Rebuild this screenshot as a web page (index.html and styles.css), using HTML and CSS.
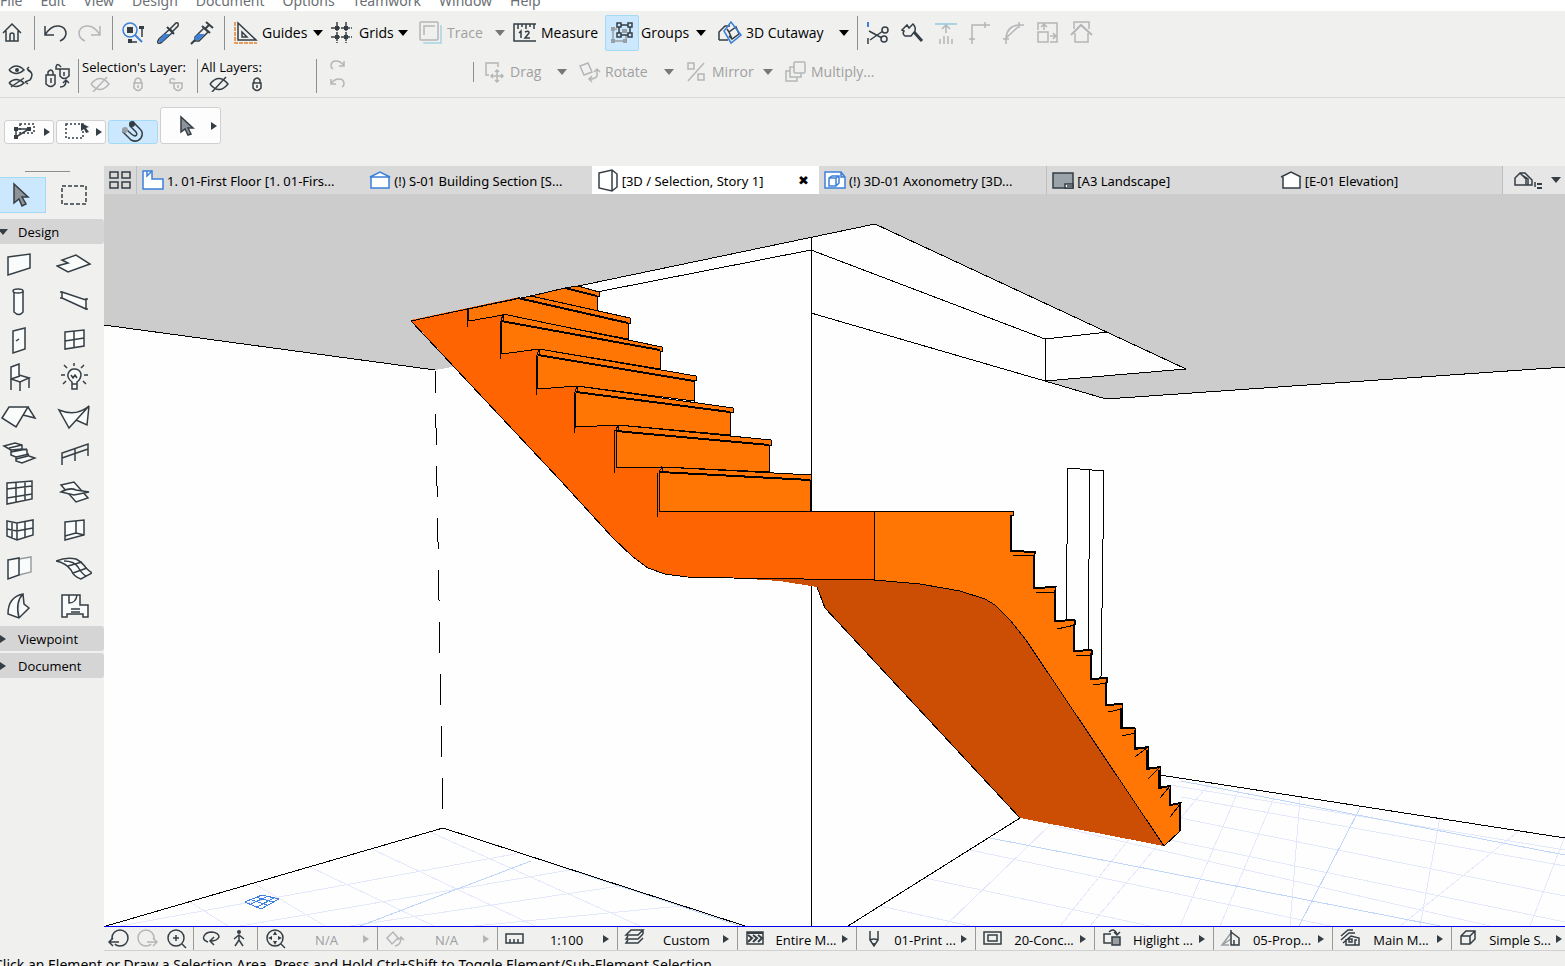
FILE: index.html
```html
<!DOCTYPE html>
<html lang="en">
<head>
<meta charset="utf-8">
<title>3D / Selection, Story 1</title>
<link rel="stylesheet" href="styles.css">
</head>
<body>
<nav class="menubar">
  <button>File</button><button>Edit</button><button>View</button><button>Design</button><button>Document</button><button>Options</button><button>Teamwork</button><button>Window</button><button>Help</button>
</nav>

<header class="toolbars">
  <div class="row main-row">
    <button aria-label="Home"><svg class="ic" viewBox="0 0 24 24"><path d="M1 12L10 3L19 12M4 10V20H16V10M8 20V14Q8 12 10 12Q12 12 12 14V20"/></svg></button>
    <i class="sep"></i>
    <button aria-label="Undo"><svg class="ic" viewBox="0 0 24 24"><path d="M2 5V14H11M2 14Q8 4 16 5Q23 6 23 13Q22 18 17 20"/></svg></button>
    <button aria-label="Redo" disabled><svg class="ic" viewBox="0 0 24 24"><path d="M22 5V14H13M22 14Q16 4 8 5Q1 6 1 13Q2 18 7 20"/></svg></button>
    <i class="sep"></i>
    <button aria-label="Find and select"><svg class="ic" viewBox="0 0 24 24"><circle class="blue" cx="8" cy="9" r="7"/><path class="blue w2" d="M13 14L20 21"/><path class="solid" d="M5 6H11V12H5ZM17 5H22V8H17ZM6 18H10V22H6Z"/><path d="M20 6V16M10 21H15"/></svg></button>
    <button aria-label="Pick up parameters"><svg class="ic" viewBox="0 0 24 24"><path d="M14 8L3 18Q1 21 2 22Q4 23 6 21L17 11Z"/><path class="bluefill" d="M8 13H14L6 21L2 21Z"/><path class="w2" d="M11 6L18 13"/><path d="M14 8L20 2Q23 1 22 5L17 10"/></svg></button>
    <button aria-label="Inject parameters"><svg class="ic" viewBox="0 0 24 24"><path class="w2" d="M12 5L20 12M16 1L23 7M19 4L15 8M1 23L5 19"/><path d="M14 7L5 16V20H9L18 11Z"/><path class="bluefill" d="M8 13H15L9 19H5V16Z"/></svg></button>
    <i class="sep"></i>
    <button><svg class="ic" viewBox="0 0 24 24"><path class="orange" d="M1 1V22H23" stroke-dasharray="4 1"/><path d="M4 2V19H22ZM8 11V16H13Z"/></svg><span>Guides</span><b class="down"></b></button>
    <button class="wide-end"><svg class="ic" viewBox="0 0 24 24"><path d="M6 1V22M15 1V22M0 7H21M0 16H21" stroke-dasharray="4 1"/><path class="solid" d="M4 5h4v4h-4zM13 5h4v4h-4zM4 14h4v4h-4zM13 14h4v4h-4z"/></svg><span>Grids</span><b class="down"></b></button>
    <button disabled><svg class="ic" viewBox="0 0 24 24"><path class="pale" d="M5 21V22H22V5H21"/><rect x="1" y="1" width="18" height="18" rx="1"/><path d="M5 14V5H16"/></svg><span>Trace</span><b class="down"></b></button>
    <button><svg class="ic" viewBox="0 0 24 24"><path d="M23 3H1V20H23M5 3V8M9 3V6M13 3V8M17 3V6M21 3V8M6 12L8 10V17M12 11Q16 9 16 12L12 17H17"/></svg><span>Measure</span></button>
    <button class="groups wide-end" aria-pressed="true"><span class="chip"><svg class="ic" viewBox="0 0 24 24"><path class="gray" d="M3 8V20H16M3 8H7M16 14V20"/><path d="M9 4H20V14H9Z"/><path class="hollow" d="M7 2h4v4h-4zM18 2h4v4h-4zM7 12h4v4h-4zM18 12h4v4h-4z"/><path class="grayfill" d="M1 6h4v4h-4zM1 18h4v4h-4zM13 18h4v4h-4zM12 8h5v4h-5z"/></svg></span><span>Groups</span><b class="down"></b></button>
    <button><svg class="ic" viewBox="0 0 24 24"><path d="M1 19V11L7 5H12M1 19H10M11 11L18 6L21 13L14 18ZM11 11L9 8M14 18L11 15"/><path class="blue" d="M13 1L23 14L13 22L6 10Z"/></svg><span>3D Cutaway</span><b class="down"></b></button>
    <i class="sep"></i>
    <button aria-label="Split"><svg class="ic" viewBox="0 0 24 24"><path class="blue w2" d="M2 1V6"/><path d="M2 17V23M3 10L16 17M4 19L17 10"/><circle cx="19" cy="9" r="3"/><circle cx="18" cy="18" r="3"/></svg></button>
    <button aria-label="Adjust"><svg class="ic" viewBox="0 0 24 24"><path d="M2 9L7 4L9 7L13 3Q16 6 15 10L11 15L5 15Q2 13 4 10Z"/><path class="w3" d="M14 11L22 20"/></svg></button>
    <button disabled aria-label="Elevate"><svg class="ic" viewBox="0 0 24 24"><path class="pale w2" d="M1 3H23"/><path d="M12 12V4M8 8L12 4L16 8M6 18V23M10 15V23M14 15V23M18 18V23"/></svg></button>
    <button disabled aria-label="Intersect"><svg class="ic" viewBox="0 0 24 24"><path d="M4 23V4H22M1 18H7M17 1V7"/></svg></button>
    <button disabled aria-label="Fillet"><svg class="ic" viewBox="0 0 24 24"><path d="M4 23V17Q5 5 17 4H22M1 18H7M17 1V7M4 17L16 6"/></svg></button>
    <button disabled aria-label="Resize"><svg class="ic" viewBox="0 0 24 24"><path d="M2 9V2H21V21H14M2 11H12V21H2ZM8 9V4M5 6L8 3L11 6M14 15H20M17 12L20 15L17 18"/></svg></button>
    <button disabled aria-label="Roof trim"><svg class="ic" viewBox="0 0 24 24"><path d="M4 8V1H19V8M5 12V21H18V12"/><path class="w2" d="M1 14L11 4L22 14"/></svg></button>
  </div>
  <div class="row layer-row">
    <button aria-label="Swap visibility"><svg class="ic big" viewBox="0 0 26 26"><path d="M1 7Q8-1 16 7Q8 14 1 7M1 20Q8 13 16 20Q8 27 1 20M3 24L16 15M19 6Q27 10 22 17L17 19M19 6L21 4M19 6L22 9M17 19L20 21"/><circle class="solid" cx="9" cy="7" r="2"/></svg></button>
    <button aria-label="Swap locks"><svg class="ic big" viewBox="0 0 26 26"><path d="M2 12H11V21Q7 26 2 21ZM4 12V9Q7 5 9 9V12M7 15V20M16 6H25V13Q20 18 16 13ZM18 6H12V4Q13-1 17 4M20 9V13M16 24Q22 24 22 18M19 20L22 17L25 20"/></svg></button>
    <i class="sep"></i>
    <section class="layers"><h2>Selection's Layer:</h2><div>
      <button disabled aria-label="Hide selection layer"><svg class="ic sm" viewBox="0 0 20 16"><path d="M1 8Q10-3 19 8Q10 19 1 8M3 16L17 1"/></svg></button>
      <button disabled aria-label="Lock selection layer"><svg class="ic sm" viewBox="0 0 20 16"><path d="M6 7H14V12Q10 17 6 12ZM7 7V4Q10 0 13 4V7M10 9V12"/></svg></button>
      <button disabled aria-label="Unlock selection layer"><svg class="ic sm" viewBox="0 0 20 16"><path d="M8 7H16V12Q12 17 8 12ZM10 7H4V4Q6 1 9 4M12 9V12"/></svg></button></div></section>
    <i class="sep"></i>
    <section class="layers"><h2>All Layers:</h2><div>
      <button aria-label="Show all layers"><svg class="ic sm" viewBox="0 0 20 16"><path d="M1 8Q10-3 19 8Q10 19 1 8M3 16L17 1"/></svg></button>
      <button aria-label="Unlock all layers"><svg class="ic sm" viewBox="0 0 20 16"><path d="M6 7H14V12Q10 17 6 12ZM7 7V4Q10 0 13 4V7M10 9V12"/></svg></button></div></section>
    <i class="sep"></i>
    <div class="history"><button disabled aria-label="Redo layers"><svg class="ic sm" viewBox="0 0 20 16"><path d="M16 4V9H11M16 9Q13 4 8 4Q3 4 3 9Q3 11 5 12"/></svg></button><button disabled aria-label="Undo layers"><svg class="ic sm" viewBox="0 0 20 16"><path d="M3 4V9H8M3 9Q6 4 11 4Q16 4 16 9Q16 11 14 12"/></svg></button></div>
    <i class="sep short"></i>
    <button class="edit" disabled><svg class="ic" viewBox="0 0 24 24"><path d="M5 15H2V3H14V7M13 10V22M7 16H19M11 12L13 10L15 12M11 20L13 22L15 20M9 14L7 16L9 18M17 14L19 16L17 18"/></svg><span>Drag</span><b class="down"></b></button>
    <button class="edit" disabled><svg class="ic" viewBox="0 0 24 24"><path d="M1 6L9 3L13 12L5 15ZM18 9V16Q16 19 11 19M15 12L18 9L21 12M13 16L10 19L13 22"/></svg><span>Rotate</span><b class="down"></b></button>
    <button class="edit" disabled><svg class="ic" viewBox="0 0 24 24"><path d="M2 3H8V9H2ZM12 14H18V20H12ZM2 21L18 3"/></svg><span>Mirror</span><b class="down"></b></button>
    <button class="edit" disabled><svg class="ic" viewBox="0 0 24 24"><rect x="9" y="2" width="11" height="11" rx="1"/><path d="M9 7H5V17H16V13M5 11H1V21H12V17"/></svg><span>Multiply...</span></button>
  </div>
</header>

<div class="infobox">
  <button aria-label="Selection method"><svg class="ic" viewBox="0 0 24 24"><path d="M7 4H21V13H7Z" stroke-dasharray="2 2"/><path d="M3 18V9H16L3 17"/><path class="solid" d="M1 15h4v4h-4zM1 7h4v4h-4zM14 7h4v4h-4z"/></svg><b class="right"></b></button>
  <button aria-label="Marquee method"><svg class="ic" viewBox="0 0 24 24"><path d="M1 4H18V18H1Z" stroke-dasharray="2 2"/><path class="solid" d="M16 3L24 7L21 8L24 12L21 13L19 9L16 11Z"/></svg><b class="right"></b></button>
  <button class="on" aria-label="Magnet"><svg class="ic" viewBox="0 0 24 24"><path d="M5 9L2 12L10 20Q16 23 20 18Q23 13 19 9L12 2L9 6L15 12Q17 15 14 16Q12 16 5 9Z"/><circle class="solid" cx="11" cy="4" r="3"/><circle class="grayfill" cx="4" cy="10" r="3"/></svg></button>
  <button class="tall" aria-label="Arrow tool"><svg class="ic" viewBox="0 0 24 24"><path class="arrow" d="M6 3V18L10 15L13 21L16 20L13 14H18Z"/></svg><b class="right"></b></button>
</div>

<main>
  <aside>
    <div class="grip"></div>
    <div class="pick">
      <button class="on" aria-label="Arrow"><svg class="ic xl" viewBox="0 0 36 30"><path class="arrow" d="M12 4V23L17 19L20 26L24 24L20 17H26Z"/></svg></button>
      <button aria-label="Marquee"><svg class="ic xl" viewBox="0 0 36 30"><path d="M6 6H30V24H6Z" stroke-dasharray="4 2"/></svg></button>
    </div>
    <button class="group-head"><b class="down"></b>Design</button>
    <div class="tools">
      <button aria-label="Wall"><svg class="ic xl" viewBox="0 0 36 30"><path class="pf" d="M7 8L29 5V19L7 26Z"/></svg></button>
      <button aria-label="Slab"><svg class="ic xl" viewBox="0 0 36 30"><path class="pf" d="M1 17L12 14L6 11L20 6L34 15L12 23Z"/></svg></button>
      <button aria-label="Column"><svg class="ic xl" viewBox="0 0 36 30"><path class="pf" d="M13 4V25Q18 30 22 25V4"/><ellipse class="pf" cx="17" cy="4" rx="5" ry="2"/></svg></button>
      <button aria-label="Beam"><svg class="ic xl" viewBox="0 0 36 30"><path class="pf" d="M6 5L30 13V22L6 11ZM4 5H6M4 11H6M29 12H32M29 22H32"/></svg></button>
      <button aria-label="Door"><svg class="ic xl" viewBox="0 0 36 30"><path class="pf" d="M12 6L24 3V24L12 28Z"/><path d="M15 16L18 14"/></svg></button>
      <button aria-label="Window"><svg class="ic xl" viewBox="0 0 36 30"><path class="pf" d="M9 7L28 5V21L9 24ZM18 6V22M9 16L28 13"/></svg></button>
      <button aria-label="Object"><svg class="ic xl" viewBox="0 0 36 30"><path class="pf" d="M10 4L18 1V12L28 15L19 19L10 16Z"/><path d="M10 16V27M19 19V28M28 15V25M10 16L19 13"/></svg></button>
      <button aria-label="Lamp"><svg class="ic xl" viewBox="0 0 36 30"><path class="pf" d="M16 21V19Q11 15 12 11Q14 6 18 6Q24 6 25 11Q25 16 21 19V21V26H16ZM16 21H21"/><path d="M15 12L17 15L19 12L21 15M18 3V0M11 5L8 2M25 5L28 2M9 12H5M28 12H32M10 18L7 21M27 18L30 21"/></svg></button>
      <button aria-label="Roof"><svg class="ic xl" viewBox="0 0 36 30"><path class="pf" d="M1 17L8 6H27L15 26ZM27 6L34 17L22 14"/></svg></button>
      <button aria-label="Shell"><svg class="ic xl" viewBox="0 0 36 30"><path class="pf" d="M3 9Q20 16 33 5L13 27ZM33 5L31 24L20 19"/></svg></button>
      <button aria-label="Stair"><svg class="ic xl" viewBox="0 0 36 30"><path class="pf" d="M3 7L14 4L21 6V10L26 11V15L28 17L34 19L21 24L15 22V18L10 16V11Z"/><path d="M8 9L21 6M10 13L26 10M15 18L28 15M10 11L21 10M15 20L27 17"/></svg></button>
      <button aria-label="Railing"><svg class="ic xl" viewBox="0 0 36 30"><path d="M6 26V14L32 5V17M6 19L32 10M19 9V22"/></svg></button>
      <button aria-label="Curtain wall"><svg class="ic xl" viewBox="0 0 36 30"><path class="pf" d="M6 6L31 4V22L6 27ZM6 12L31 9M6 21L31 17M15 5V25M24 5V24"/></svg></button>
      <button aria-label="Mesh"><svg class="ic xl" viewBox="0 0 36 30"><path class="pf" d="M5 8L18 5L32 21L20 25Z"/><path class="pf" d="M5 15Q14 10 20 13L33 15L18 18Z"/></svg></button>
      <button aria-label="Curtain grid"><svg class="ic xl" viewBox="0 0 36 30"><path class="pf" d="M6 6L16 8L32 5V20L16 25L6 21ZM16 8V25M24 7V22M11 7V23M6 14L16 16L32 13"/></svg></button>
      <button aria-label="Opening"><svg class="ic xl" viewBox="0 0 36 30"><path class="pf" d="M9 7L28 5V20L9 25Z"/><path d="M20 6V18L9 21M20 18L28 20"/></svg></button>
      <button aria-label="Wall end"><svg class="ic xl" viewBox="0 0 36 30"><path class="gray pf" d="M18 6L30 4V19L18 22"/><path class="pf" d="M7 7L18 5V22L7 26Z"/></svg></button>
      <button aria-label="Truss"><svg class="ic xl" viewBox="0 0 36 30"><path class="pf" d="M0 8Q10 4 20 6Q26 9 30 15Q33 18 36 20L25 26Q18 24 15 17Q10 10 0 8"/><path d="M8 8Q18 8 22 14Q26 21 30 23M12 13L26 9M17 20L31 15"/></svg></button>
      <button aria-label="Morph"><svg class="ic xl" viewBox="0 0 36 30"><path class="pf" d="M7 23Q7 6 22 3L23 13L28 17L18 27ZM22 3Q14 11 18 27"/></svg></button>
      <button aria-label="Zone"><svg class="ic xl" viewBox="0 0 36 30"><path class="pf" d="M6 4H24V14H32V26H27V23H11V26H6Z"/><path d="M13 4V12Q20 12 21 4M15 18H24M15 21H24"/></svg></button>
    </div>
    <button class="group-head"><b class="right"></b>Viewpoint</button>
    <button class="group-head"><b class="right"></b>Document</button>
  </aside>

  <section class="work">
    <div class="tabs">
      <button class="overview" aria-label="Tab overview"><svg class="ic" viewBox="0 0 24 24"><path d="M2 4h8v6h-8zM14 4h8v6h-8zM2 14h8v6h-8zM14 14h8v6h-8z"/></svg></button>
      <button class="tab"><svg class="ic" viewBox="0 0 24 24"><path class="blue wf" d="M1 2H10V10H21V20H1Z"/><path class="blue" d="M5 2V7L10 2"/></svg><span>1. 01-First Floor [1. 01-Firs...</span></button>
      <button class="tab"><svg class="ic" viewBox="0 0 24 24"><path class="blue wf" d="M2 8V19H20V8M1 8L11 3L21 8Z"/></svg><span>(!) S-01 Building Section [S...</span></button>
      <button class="tab active"><svg class="ic" viewBox="0 0 24 24"><path d="M2 4L15 1L20 5V18L15 22L2 19ZM15 1V22"/></svg><span>[3D / Selection, Story 1]</span><b class="close">✖</b></button>
      <button class="tab"><svg class="ic" viewBox="0 0 24 24"><path class="blue wf" d="M1 3H17L21 8V19H1ZM17 3V8H21M5 9L8 7H15V14L12 17H5ZM5 9H12V17M12 9L15 7"/></svg><span>(!) 3D-01 Axonometry [3D...</span></button>
      <button class="tab split"><svg class="ic" viewBox="0 0 24 24"><path class="sheet" d="M1 4H21V19H1Z"/><path class="wf" d="M13 15H21V19H13Z"/><path d="M15 17H21"/></svg><span>[A3 Landscape]</span></button>
      <button class="tab"><svg class="ic" viewBox="0 0 24 24"><path class="wf" d="M3 8V19H20V8M1 8L11 3L21 8"/></svg><span>[E-01 Elevation]</span></button>
      <button class="more" aria-label="Tab options"><svg class="ic" viewBox="0 0 30 24"><path d="M2 17V10L7 5L13 11V17ZM7 5L12 5L19 12V17H13M9 7L15 11V17M22 14V19"/><path class="w2" d="M24 16H29M24 20H29"/></svg><b class="down"></b></button>
    </div>
    <div class="view">
      <svg viewBox="104 194 1461 732" preserveAspectRatio="xMinYMin slice" role="img" aria-label="3D view of a staircase" shape-rendering="crispEdges">
        <rect class="wf0" x="104" y="194" width="1461" height="732"/>
        <path class="ceil" d="M104 194H1565V367L1106 399L1045 381L1186 369L875 224L411 320L458 366L435 370L104 325Z"/>
        <g class="grid">
          <path d="M190 902L228 926M255 884L325 926M310 867L434 926M372 849L535 926M430 832L640 926M120 926L520 853M240 926L570 870M350 926L620 886M475 926L680 906"/>
          <path d="M970 850L1330 926M1055 826L1490 926M1170 840L1565 922M1180 818L1565 896M1181 797L1565 866M1170 785L1565 850M925 878L1150 926M880 906L970 926M945 926L1050 825M1060 926L1130 838M1180 926L1240 787M1290 926L1300 798M1420 926L1440 817M1530 926L1565 836M1090 926L1210 783M1220 926L1275 795M1400 926L1520 830"/>
          <path class="axis" d="M360 926L531 861M487 842L740 926M990 838L1440 926M1299 926L1360 808M1181 781L1565 855"/>
        </g>
        <path class="ln" d="M104 325L435 370M411 321L875 224L1186 369L1045 381M811 313L1045 381L1106 399L1565 367M597 292L811 250L1045 339L1108 332M1045 339V381M811 237V511M811 585L812 926M106 926L443 828L745 926M848 926L1020 818M1160 775L1565 838M1068 468L1104 471M1068 468L1066 622M1104 471L1101 677M1090 470L1088 651"/>
        <path class="ln" d="M435 370L443 828" stroke-dasharray="31 21" stroke-dashoffset="8"/>

        <path class="under" d="M733 578L874 579L920 583L960 590L986 598L997 604L1012 619L1028 640L1164 846L1020 818L825 608L817 587L780 581Z"/>
        <path class="ln" d="M817 587L825 608L1020 818"/>
        <path class="side" d="M411 320L519 297L662 440L662 511H874V580L733 578L687 577L665 574L648 568L633 557L613 538L560 480Z"/>
        <path class="ln" d="M519 298L411 321L560 480L613 538L633 557L648 568L665 574L687 577L733 578L874 580"/>

        <g class="riser">
          <path d="M531 296L565 288L578 286L599 292V296H597V311Z"/>
          <path d="M468 309L531 296L630 318V323H628V339L503 315L469 321Z"/>
          <path d="M501 321L503 314L662 347V351H660V369L539 349L502 354Z"/>
          <path d="M537 355L539 349L696 376V380H694V401L577 386L538 389Z"/>
          <path d="M575 392L577 386L733 408V412H730V435L618 425L576 427Z"/>
          <path d="M616 430L618 425L771 440V445H769V472L662 467L617 468Z"/>
          <path d="M659 472L662 467L811 475V480H810V511H659Z"/>
          <path d="M874 511L1013 512V515H1011V551L1036 552L1034 556V588L1056 587L1055 590V620L1075 620L1074 624V650L1092 650L1091 653V679L1107 678L1106 682V705L1122 704V728L1135 728V748L1148 747V768L1160 767V787L1170 786V805L1181 803L1180 831L1164 846L1026 640L1010 620L995 605L985 599L960 591L920 584L874 580Z"/>
        </g>
        <path class="ln" d="M659 511H1013"/>
        <path class="ln bold" d="M565 288L597 296M518 298L628 323M501 321L660 350M538 355L694 381M576 392L730 412M616 431L769 445M660 472L810 480M1011 515V551L1036 552M1034 556V588L1056 587M1055 590V621L1075 620M1074 624V651L1092 650M1091 653V679L1107 678M1106 682V705L1122 704M1121 708V728L1135 728M1135 730V749L1148 747M1147 750V769L1160 767M1159 770V788L1170 786M1170 789V805L1181 803M1180 806V831"/>
        <path class="ln" d="M503 321V314M539 355V349M577 392V386M618 431V425M662 472V467M467 308V327M500 321V359M536 355V395M574 392V433M614 430V473M657 473V517M1013 555H1034V552M1036 593L1055 592V588M1057 629L1075 625V620M1076 656L1092 655V650M1093 685L1107 683V678M1108 712L1122 709V704M1122 736L1135 733V728M1135 757L1148 747M1148 779L1160 767M1160 798L1170 786M1170 817L1181 803"/>
        <path class="sheetmark" d="M245 902L262 895L279 899L261 909ZM251 904L268 896M257 907L274 898M249 899L267 905M255 897L273 902"/>
      </svg>
    </div>
    <div class="quick">
      <div class="cell nav3"><button aria-label="Previous view"><svg class="ic" viewBox="0 0 24 24"><circle cx="13" cy="11" r="8"/><path class="halo" d="M1 15H8"/><path d="M12 15H2M6 11L2 15L6 19"/></svg></button><button disabled aria-label="Next view"><svg class="ic" viewBox="0 0 24 24"><circle cx="10" cy="11" r="8"/><path class="halo" d="M15 15H23"/><path d="M11 15H21M17 11L21 15L17 19"/></svg></button><button aria-label="Zoom in"><svg class="ic" viewBox="0 0 24 24"><circle cx="11" cy="11" r="8"/><path d="M17 17L21 21M11 8V14M8 11H14"/></svg></button></div>
      <div class="cell nav2"><button aria-label="Orbit"><svg class="ic" viewBox="0 0 24 24"><path d="M9 15Q3 13 5 9Q7 5 13 5Q20 6 20 10Q18 14 12 14M15 10L11 14L15 18"/></svg></button><button aria-label="Walk"><svg class="ic" viewBox="0 0 24 24"><circle class="solid" cx="12" cy="5" r="2"/><path d="M12 8V13L16 19M12 13L8 19M7 12L12 8L17 12"/></svg></button></div>
      <button class="cell zoomed"><svg class="ic" viewBox="0 0 24 24"><circle cx="12" cy="11" r="8"/><path d="M18 17L22 21"/><path class="solid" d="M10 8L12 4L14 8ZM10 14L12 18L14 14ZM9 9L5 11L9 13ZM15 9L19 11L15 13Z"/></svg><span class="na">N/A</span><b class="right dim"></b></button>
      <button class="cell zoomed" disabled><svg class="ic" viewBox="0 0 24 24"><path d="M4 11L10 5L15 11L9 17ZM12 19Q18 18 18 11M15 13L18 10L21 13"/></svg><span class="na">N/A</span><b class="right dim"></b></button>
      <button class="cell zoomed"><svg class="ic" viewBox="0 0 24 24"><path d="M3 7H20V16H3ZM7 16V12M11 16V12M15 16V12"/></svg><span>1:100</span><b class="right"></b></button>
      <button class="cell zoomed"><svg class="ic" viewBox="0 0 24 24"><path d="M8 3H20L15 8H3ZM20 7L15 12H3L5 9M20 11L15 16H3L5 13M20 3V7"/></svg><span>Custom</span><b class="right"></b></button>
      <button class="cell"><svg class="ic" viewBox="0 0 24 24"><path d="M4 5H20V17H4Z"/><path class="w2" d="M4 6H20M5 8L9 11L5 15M10 8L14 11L10 15M15 8L19 11L15 15"/></svg><span>Entire M...</span><b class="right"></b></button>
      <button class="cell"><svg class="ic" viewBox="0 0 24 24"><path d="M8 4V13L12 19L16 13V4M8 13Q12 11 16 13M12 16V19"/></svg><span>01-Print ...</span><b class="right"></b></button>
      <button class="cell"><svg class="ic" viewBox="0 0 24 24"><path d="M3 5H20V17H3ZM7 8H16V14H7Z"/></svg><span>20-Conc...</span><b class="right"></b></button>
      <button class="cell"><svg class="ic" viewBox="0 0 24 24"><path d="M11 16H4V7H11M9 5Q14 0 17 7M14 5L17 8L20 5"/><path class="grayfill dk" d="M12 10H20V18H12Z"/></svg><span>Higlight ...</span><b class="right"></b></button>
      <button class="cell"><svg class="ic" viewBox="0 0 24 24"><path class="gray" d="M12 6L3 18H10M3 18L12 12"/><path d="M12 3V18H20V11L12 5M15 18V13"/></svg><span>05-Prop...</span><b class="right"></b></button>
      <button class="cell"><svg class="ic" viewBox="0 0 24 24"><path d="M3 9L10 3L15 3M3 13L11 6L17 6M5 16L13 9L21 11V18H8V12M11 12H14V15H11ZM17 18V13H19"/></svg><span>Main M...</span><b class="right"></b></button>
      <button class="cell"><svg class="ic" viewBox="0 0 24 24"><path d="M4 9L9 4H18V12L13 17H4ZM4 9H13V17M13 9L18 4"/></svg><span>Simple S...</span><b class="right"></b></button>
    </div>
  </section>
</main>
<footer class="status">Click an Element or Draw a Selection Area. Press and Hold Ctrl+Shift to Toggle Element/Sub-Element Selection.</footer>
</body>
</html>
```
FILE: styles.css
```css
* { box-sizing: border-box; }
html, body { height: 100%; }
body {
  margin: 0;
  display: flex;
  flex-direction: column;
  overflow: hidden;
  background: #f0f0ef;
  color: #000;
  font: 13px/20px "Open Sans", "Noto Sans", sans-serif;
}
button {
  display: flex;
  align-items: center;
  padding: 0;
  border: 0;
  background: none;
  color: inherit;
  font: inherit;
  white-space: nowrap;
}
button:disabled { color: #a0a0a0; }

/* icons */
.ic { width: 24px; height: 24px; flex: none; fill: none; stroke: #343e44; stroke-width: 1.5; }
.ic.big { width: 26px; height: 26px; }
.ic.sm { width: 20px; height: 16px; }
.ic.xl { width: 36px; height: 30px; }
button:disabled .ic { stroke: #b4b6b7; }
.ic .blue { stroke: #3c80d8; }
.ic .orange { stroke: #e67e2e; }
.ic .pale { stroke: #a8d4e4; }
.ic .gray { stroke: #999fa3; }
.ic .w2 { stroke-width: 2; }
.ic .w3 { stroke-width: 3; }
.ic .solid { fill: #343e44; stroke: none; }
.ic .bluefill { fill: #3c80d8; stroke: none; }
.ic .grayfill { fill: #999fa3; stroke: none; }
.ic .grayfill.dk { stroke: #343e44; }
.ic .hollow { fill: #cce8ff; }
.ic .pf { fill: #fafbfb; }
.ic .wf { fill: #fff; }
.ic .sheet { fill: #9aa2aa; }
.ic .arrow { fill: #8e9499; }
.ic .halo { stroke: #f0f0ef; stroke-width: 5; }

.down, .right { flex: none; width: 0; height: 0; border: solid transparent; }
.down { border-width: 6px 5px 0; border-top-color: currentColor; }
.right { border-width: 4px 0 4px 6px; border-left-color: #343e44; }
.right.dim { border-left-color: #b4b6b7; }
button:disabled .down { color: #777; }

.menubar {
  display: flex;
  align-items: flex-end;
  gap: 18px;
  height: 11px;
  flex: none;
  overflow: hidden;
  background: #fff;
  color: #6a6f74;
  font-family: "Noto Sans", sans-serif;
  font-size: 14px;
}

/* toolbars */
.toolbars { flex: none; border-bottom: 1px solid #d8d8d8; }
.row { display: grid; align-items: center; font-size: 14px; }
.main-row {
  height: 44px;
  padding-left: 2px;
  grid-template-columns: 32px 9px 35px 34px 10px 34px 34px 34px 10px 97px 88px 94px 92px 113px 139px 9px repeat(7, 34px);
}
.main-row button { gap: 4px; padding-right: 8px; }
.main-row .wide-end { padding-right: 12px; }
.row .down { margin-left: auto; }
.sep { width: 1px; height: 34px; background: #8b8f92; }
.sep.short { height: 20px; margin-bottom: 8px; }
.chip {
  display: flex;
  align-items: center;
  justify-content: center;
  width: 34px;
  height: 36px;
  background: #cce8ff;
  border: 1px solid #a3daf6;
  border-radius: 2px;
}
.main-row .groups { gap: 2px; }
.layer-row {
  height: 42px;
  padding-left: 8px;
  grid-template-columns: 36px 34px 4px 115px 4px 115px 12px 145px 11px 95px 107px 99px 96px;
}
.layer-row > .edit { gap: 2px; padding: 0 12px 8px 0; }
.layer-row h2 { margin: 0; font: inherit; font-size: 13px; line-height: 18px; white-space: nowrap; }
.layers { padding-bottom: 3px; }
.layers div { display: flex; gap: 18px; padding-left: 8px; }
.history { display: grid; gap: 2px; padding-bottom: 4px; }

.infobox { display: flex; align-items: flex-end; gap: 2px; flex: none; height: 68px; padding: 0 4px 22px; }
.infobox button {
  justify-content: space-between;
  width: 50px;
  height: 24px;
  padding: 0 3px 0 8px;
  background: #fdfdfd;
  border: 1px solid #d0d0d0;
  border-radius: 3px;
}
.infobox .on { justify-content: center; padding: 0; background: #cce8ff; border-color: #a3daf6; }
.infobox .tall { width: 61px; height: 37px; padding-left: 14px; }

main { display: grid; grid-template-columns: 104px minmax(0, 1fr); flex: 1; min-height: 0; }

/* toolbox */
aside { overflow: hidden; }
.grip { width: 45px; height: 6px; margin-left: 25px; border-bottom: 1px solid #8b8f92; }
.pick { display: flex; gap: 5px; padding: 5px 0 6px; }
.pick button { width: 46px; height: 36px; justify-content: center; }
.pick .on { background: #cce8ff; border: 1px solid #a3daf6; border-left: 0; padding-right: 6px; }
.group-head {
  position: relative;
  width: 100%;
  height: 25px;
  margin-bottom: 2px;
  padding-left: 18px;
  background: #d5d5d5;
  border-radius: 0 3px 3px 0;
}
.group-head b { position: absolute; left: 0; }
.group-head .down { left: -2px; color: #343e44; }
.tools { display: grid; grid-template-columns: 55px 49px; grid-auto-rows: 38px; }
.tools button { padding: 0 0 2px 1px; }

/* drawing area */
.work { display: flex; flex-direction: column; min-width: 0; min-height: 0; }
.tabs { display: flex; height: 28px; flex: none; background: #d9d9d9; font-family: "Noto Sans", sans-serif; }
.overview { width: 33px; justify-content: center; border-right: 1px solid #bfbfbf; }
.tab { flex: 1 1 0; min-width: 0; gap: 1px; padding: 2px 10px 0 5px; }
.tab.active { background: #fff; }
.tab.split { border-left: 1px solid #bfbfbf; }
.close { margin-left: auto; font-family: "DejaVu Sans", sans-serif; font-size: 13px; }
.more { width: 63px; gap: 8px; padding-left: 10px; background: #e6e6e6; border-left: 1px solid #bfbfbf; }
.more .ic { width: 30px; }
.more .down { color: #343e44; }
.view { flex: 1; min-height: 0; border-bottom: 1px solid #0000f0; }
.view svg { display: block; width: 100%; height: 100%; }
.wf0 { fill: #fefefe; }
.ceil { fill: #ccc; }
.side { fill: #ff6403; }
.under { fill: #cb4e04; }
.riser path { fill: #ff7605; stroke: #000; stroke-width: 1; }
.ln { fill: none; stroke: #000; stroke-width: 1; }
.ln.bold { stroke-width: 2; }
.grid path { fill: none; stroke: #e4e8fb; stroke-width: 1; }
.grid .axis { stroke: #c0d6f8; }
.sheetmark { fill: none; stroke: #3c80e0; stroke-width: 1; }

.quick { display: flex; flex: none; height: 24px; overflow: hidden; border-bottom: 1px solid #d0d0d0; }
.cell { display: flex; align-items: center; flex: 1 0 119px; min-width: 0; padding: 0 8px 0 5px; border-left: 1px solid #999; }
.cell.zoomed { flex-basis: 120px; }
.cell span { flex: 1; text-align: center; padding: 2px 0 0 3px; }
.cell .na { color: #9a9c9e; }
.cell.nav3 { flex: 0 0 89px; gap: 5px; padding: 0 0 0 3px; border-left: 0; }
.cell.nav2 { flex: 0 0 64px; gap: 4px; }

.status { flex: none; height: 15px; margin-left: -6px; padding-top: 4px; overflow: hidden; font-family: "Noto Sans", sans-serif; font-size: 14px; white-space: nowrap; }
```
